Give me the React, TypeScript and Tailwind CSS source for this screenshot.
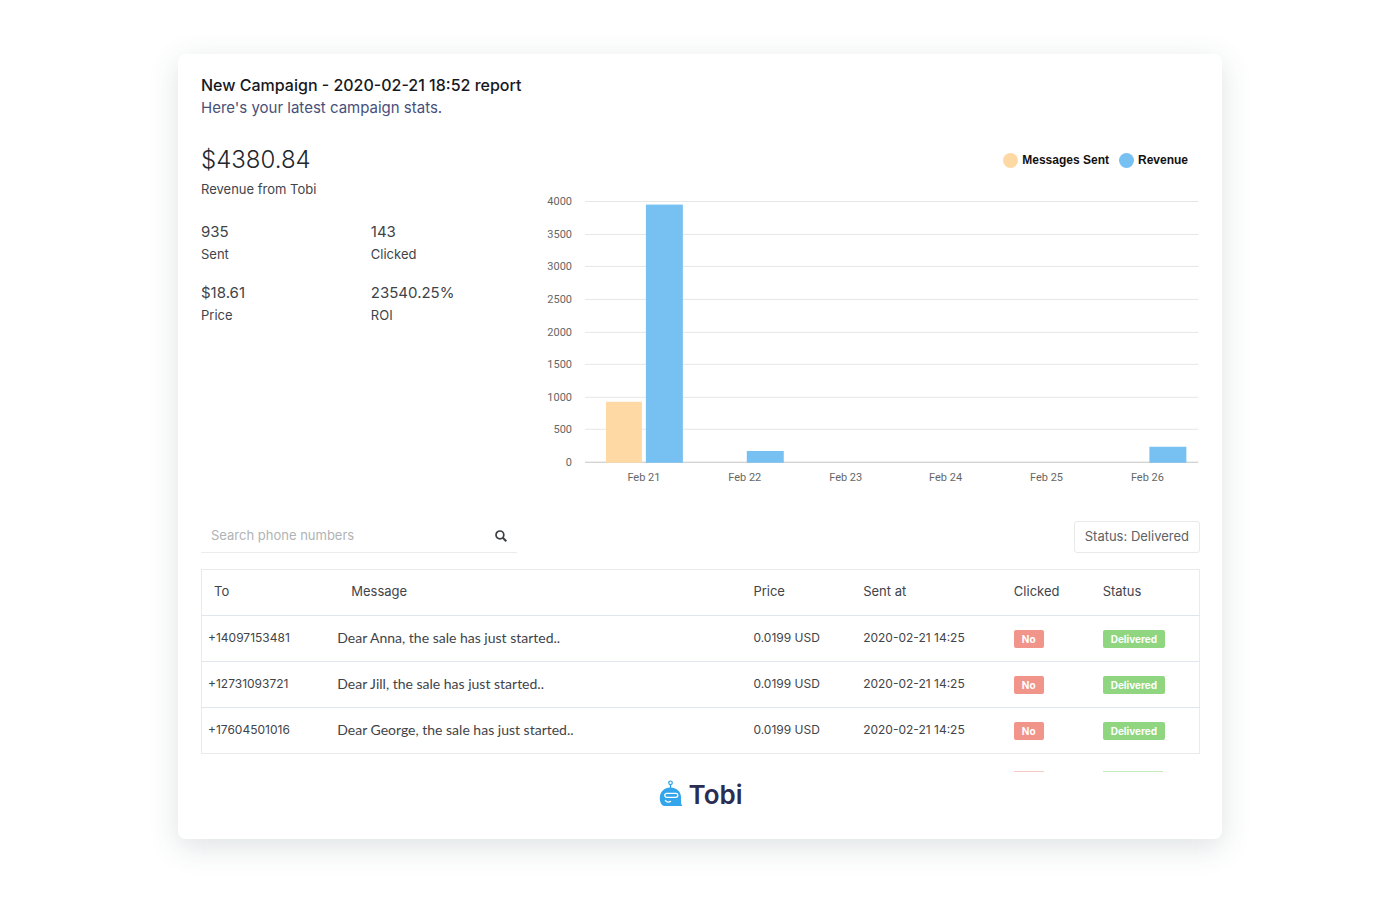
import React, { useState } from 'react';

const stats = [
  { value: '935', label: 'Sent' },
  { value: '143', label: 'Clicked' },
  { value: '$18.61', label: 'Price' },
  { value: '23540.25%', label: 'ROI' },
];

const days = [
  { label: 'Feb 21', sent: 935, revenue: 3960 },
  { label: 'Feb 22', sent: 0, revenue: 180 },
  { label: 'Feb 23', sent: 0, revenue: 0 },
  { label: 'Feb 24', sent: 0, revenue: 0 },
  { label: 'Feb 25', sent: 0, revenue: 0 },
  { label: 'Feb 26', sent: 0, revenue: 245 },
];

const ticks = [4000, 3500, 3000, 2500, 2000, 1500, 1000, 500, 0];

const messages = [
  { to: '+14097153481', text: 'Dear Anna, the sale has just started..' },
  { to: '+12731093721', text: 'Dear Jill, the sale has just started..' },
  { to: '+17604501016', text: 'Dear George, the sale has just started..' },
];

const BASE = 272;
const scale = (value: number) => (value / 4000) * 261;

function Chart() {
  return (
    <svg viewBox="0 0 660 296" className="block w-full" role="img" aria-label="Messages sent and revenue per day">
      {ticks.map((tick) => {
        const y = Math.round(BASE - scale(tick));
        return (
          <g key={tick}>
            <rect x="44" y={y - 1} width="614" height="1" fill={tick === 0 ? '#c4c4c4' : '#e6e6e6'} />
            <text x="31" y={y + 3} textAnchor="end" fontSize="11" fill="#666" fontFamily="Roboto, sans-serif">
              {tick}
            </text>
          </g>
        );
      })}
      {days.map((day, i) => {
        const x = 65 + Math.round(i * 100.8);
        return (
          <g key={day.label}>
            <rect x={x} y={BASE - scale(day.sent)} width="36" height={scale(day.sent)} fill="#fed9a4" />
            <rect x={x + 40} y={BASE - scale(day.revenue)} width="37" height={scale(day.revenue)} fill="#77c0f2" />
            <text x={x + 38} y="290" textAnchor="middle" fontSize="11" fill="#666" fontFamily="Roboto, sans-serif">
              {day.label}
            </text>
          </g>
        );
      })}
    </svg>
  );
}

function Logo() {
  return (
    <div className="flex items-end justify-center gap-1.5">
      <svg width="24" height="27" viewBox="0 0 24 27" fill="none" aria-hidden="true">
        <circle cx="11.5" cy="2.8" r="1.8" stroke="#2e9fe6" strokeWidth="1.2" />
        <path d="M11.5 4.6V9" stroke="#2e9fe6" strokeWidth="1.3" />
        <path
          d="M11.3 7.5C17.2 7.5 22 11.6 22 17v5.6c0 1.2.6 2.2 1.4 3.4H6C2.8 26 .8 22.4.8 18.2.8 11.8 5.4 7.5 11.3 7.5Z"
          fill="#33a5ea"
        />
        <rect x="5.8" y="13.3" width="13" height="4" rx="2" stroke="#fff" strokeWidth="1.3" />
        <path d="M6.5 20.6c1 1.5 3.3 1.8 5 .8" stroke="#fff" strokeWidth="1.4" strokeLinecap="round" />
      </svg>
      <span className="text-[26px] leading-6 font-semibold text-[#2b2d51]">Tobi</span>
    </div>
  );
}

export default function App() {
  const [query, setQuery] = useState('');

  return (
    <div className="min-h-screen bg-white px-4 py-[54px] font-['Inter',sans-serif] text-[#3f4449]">
      <main className="mx-auto w-full max-w-[1044px] rounded-lg bg-white pt-5 pr-[22px] pb-8 pl-[23px] shadow-[0_8px_30px_rgba(50,75,80,0.16)]">
        <h1 className="text-base leading-[22px] font-medium text-[#17181f]">New Campaign - 2020-02-21 18:52 report</h1>
        <p className="text-[15px] leading-6 text-[#48507a]">Here's your latest campaign stats.</p>

        <section className="mt-5 flex">
          <div className="w-[34%] shrink-0 pt-[3px]">
            <p className="text-2xl leading-[34px] font-light text-[#22272c]">$4380.84</p>
            <p className="text-[13px] leading-6">Revenue from Tobi</p>
            <dl className="mt-5 grid grid-cols-2 gap-y-[17px]">
              {stats.map((stat) => (
                <div key={stat.label} className="flex flex-col-reverse">
                  <dt className="text-[13px] leading-[22px]">{stat.label}</dt>
                  <dd className="text-[15px] leading-[22px]">{stat.value}</dd>
                </div>
              ))}
            </dl>
          </div>

          <div className="min-w-0 flex-1">
            <div className="flex justify-end gap-2.5 pt-3 pr-3 font-['Liberation_Sans',sans-serif] text-xs leading-4 font-bold text-[#111]">
              <span className="flex items-center gap-1">
                <span className="size-[15px] rounded-full bg-[#fed9a4]" />
                Messages Sent
              </span>
              <span className="flex items-center gap-1">
                <span className="size-[15px] rounded-full bg-[#77c0f2]" />
                Revenue
              </span>
            </div>
            <div className="mt-[23px]">
              <Chart />
            </div>
          </div>
        </section>

        <div className="mt-[34px] flex items-center justify-between">
          <div className="flex h-8 w-[316px] items-center border-b border-[#ececec] px-2.5">
            <input
              type="text"
              aria-label="Search phone numbers"
              placeholder="Search phone numbers"
              value={query}
              onChange={(e) => setQuery(e.target.value)}
              className="min-w-0 flex-1 text-[13px] placeholder-[#b0b3b5] outline-none"
            />
            <button type="button" aria-label="Search">
              <svg width="12" height="12" viewBox="0 0 12 12" fill="none" stroke="#3c3f42" strokeWidth="1.7">
                <circle cx="4.9" cy="4.9" r="3.9" />
                <path d="M7.8 7.8l3.5 3.5" strokeWidth="2" />
              </svg>
            </button>
          </div>
          <button type="button" className="h-8 rounded-[3px] border border-[#e8e9ea] px-2.5 text-[13px] text-[#5c6266]">
            Status: Delivered
          </button>
        </div>

        <table className="mt-4 w-full table-fixed border border-[#e9ebee] text-left text-[13px]">
          <colgroup>
            <col className="w-[13%]" />
            <col className="w-[41.7%]" />
            <col className="w-[11%]" />
            <col className="w-[15.1%]" />
            <col className="w-[8.9%]" />
            <col />
          </colgroup>
          <thead>
            <tr className="h-[46px]">
              <th className="pl-3 font-normal">To</th>
              <th className="pl-5 font-normal">Message</th>
              <th className="pl-1.5 font-normal">Price</th>
              <th className="pl-1.5 font-normal">Sent at</th>
              <th className="pl-1.5 font-normal">Clicked</th>
              <th className="pl-1.5 font-normal">Status</th>
            </tr>
          </thead>
          <tbody>
            {messages
              .filter((message) => message.to.includes(query))
              .map((message) => (
                <tr key={message.to} className="h-[46px] border-t border-[#e1e5ed]">
                  <td className="pl-1.5 text-xs">{message.to}</td>
                  <td className="pl-1.5 font-['Lato',sans-serif] text-sm">{message.text}</td>
                  <td className="pl-1.5 text-xs">0.0199 USD</td>
                  <td className="pl-1.5 text-xs">2020-02-21 14:25</td>
                  <td className="pt-0.5 pl-1.5">
                    <span className="inline-block rounded-xs bg-[#f1948a] px-2 text-[10px] leading-[18px] font-bold text-white">No</span>
                  </td>
                  <td className="pt-0.5 pl-1.5">
                    <span className="inline-block rounded-xs bg-[#90d57f] px-2 text-[10px] leading-[18px] font-bold text-white">Delivered</span>
                  </td>
                </tr>
              ))}
          </tbody>
        </table>

        {/* top edge of the next row */}
        <div className="flex h-[18px] items-end opacity-50" aria-hidden="true">
          <div className="w-[81.4%]" />
          <div className="h-px w-[30px] bg-[#f1948a]" />
          <div className="w-[5.9%]" />
          <div className="h-px w-[60px] bg-[#90d57f]" />
        </div>

        <div className="mt-2">
          <Logo />
        </div>
      </main>
    </div>
  );
}
